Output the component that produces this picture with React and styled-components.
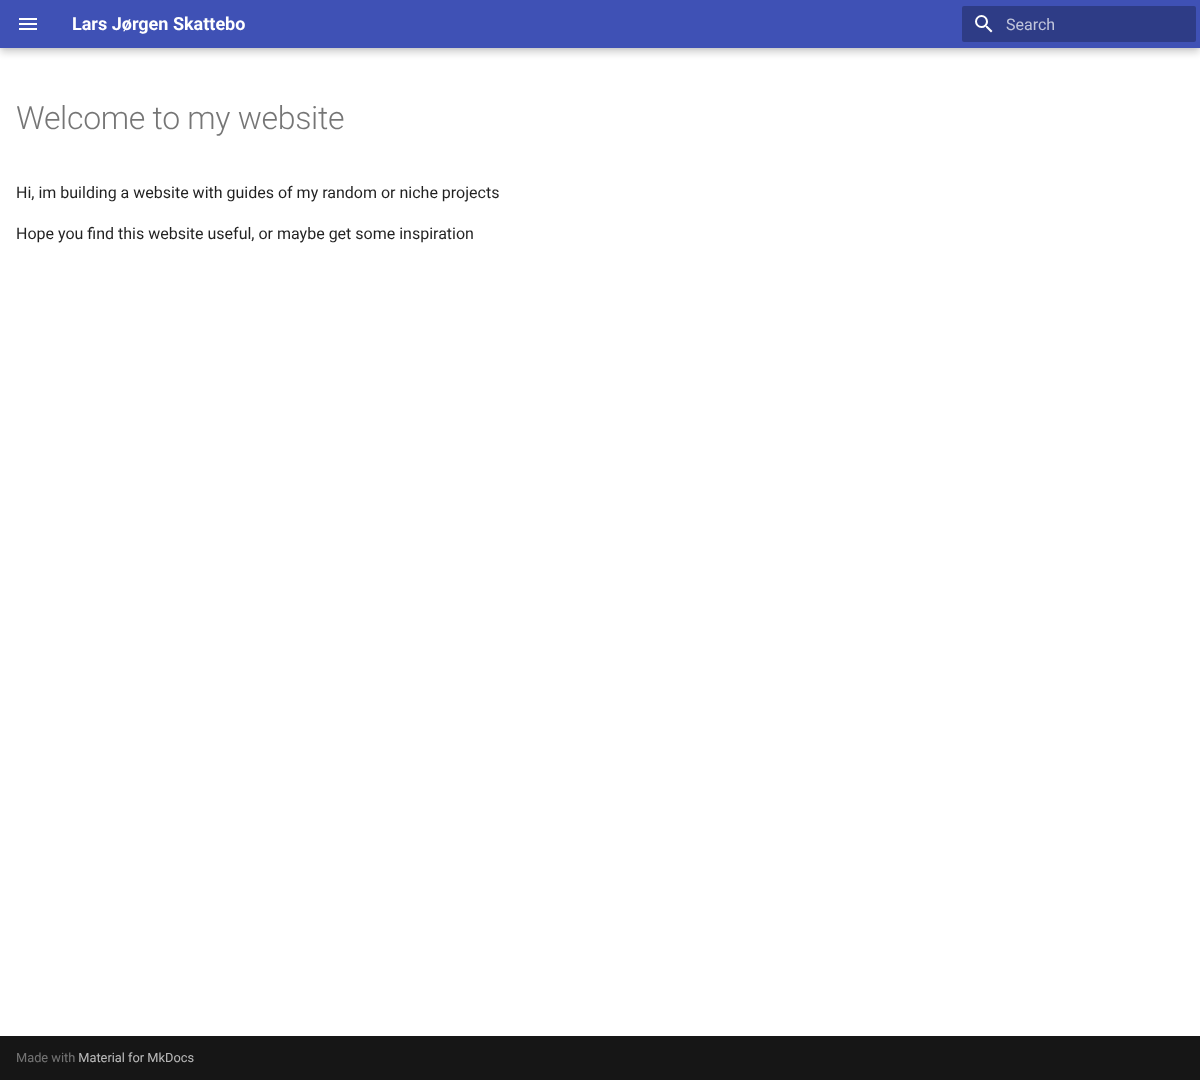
import React from "react";
import styled, { createGlobalStyle } from "styled-components";

const Global = createGlobalStyle`
  html, body { margin: 0; padding: 0; height: 100%; background: #fff; }
  #root { height: 100%; }
  * { box-sizing: border-box; }
  body {
    font-family: Roboto, "Helvetica Neue", Arial, sans-serif;
    text-rendering: geometricPrecision;
    -webkit-font-smoothing: antialiased;
  }
`;

const Page = styled.div`
  display: flex;
  flex-direction: column;
  min-height: 1080px;
  will-change: transform;
`;

const Header = styled.header`
  display: flex;
  align-items: center;
  height: 48px;
  padding: 0 4px;
  background: #3f51b5;
  color: #fff;
  box-shadow: 0 0 4px rgba(0, 0, 0, 0.1), 0 4px 8px rgba(0, 0, 0, 0.2);
`;

const IconButton = styled.button`
  display: flex;
  align-items: center;
  justify-content: center;
  width: 48px;
  height: 48px;
  padding: 0;
  border: 0;
  background: none;
  color: inherit;
`;

const SiteTitle = styled.div`
  flex: 1;
  margin-left: 20px;
  padding-top: 1px;
  font-size: 18px;
  font-weight: 700;
  line-height: 48px;
`;

const Search = styled.div`
  display: flex;
  align-items: center;
  width: 234px;
  height: 36px;
  padding-left: 10px;
  gap: 10px;
  border-radius: 2px;
  background: rgba(0, 0, 0, 0.26);
  color: rgba(255, 255, 255, 0.7);
  font-size: 16px;
`;

const Main = styled.main`
  flex: 1;
  padding: 0 16px;
`;

const Heading = styled.h1`
  margin: 49.6px 0 40.7px;
  color: rgba(0, 0, 0, 0.54);
  font-size: 32px;
  font-weight: 300;
  line-height: 41.6px;
  letter-spacing: -0.32px;
`;

const Paragraph = styled.p`
  margin: 0 0 16px;
  color: rgba(0, 0, 0, 0.87);
  font-size: 16px;
  line-height: 25.6px;
`;

const Footer = styled.footer`
  display: flex;
  align-items: center;
  height: 44px;
  padding: 0 16px;
  background: #161616;
  color: rgba(255, 255, 255, 0.4);
  font-size: 12.8px;
`;

const FooterLink = styled.a`
  margin-left: 3px;
  color: rgba(255, 255, 255, 0.7);
`;

export default function App() {
  return (
    <Page>
      <Global />
      <Header>
        <IconButton aria-label="Menu">
          <svg width="24" height="24" viewBox="0 0 24 24" fill="currentColor">
            <path d="M3 6h18v2H3V6m0 5h18v2H3v-2m0 5h18v2H3v-2z" />
          </svg>
        </IconButton>
        <SiteTitle>Lars Jørgen Skattebo</SiteTitle>
        <Search>
          <svg width="24" height="24" viewBox="0 0 24 24" fill="#fff">
            <path d="M9.5 3A6.5 6.5 0 0 1 16 9.5c0 1.61-.59 3.09-1.56 4.23l.27.27h.79l5 5-1.5 1.5-5-5v-.79l-.27-.27A6.516 6.516 0 0 1 9.5 16 6.5 6.5 0 0 1 3 9.5 6.5 6.5 0 0 1 9.5 3m0 2C7 5 5 7 5 9.5S7 14 9.5 14 14 12 14 9.5 12 5 9.5 5z" />
          </svg>
          <span>Search</span>
        </Search>
      </Header>
      <Main>
        <Heading>Welcome to my website</Heading>
        <Paragraph>Hi, im building a website with guides of my random or niche projects</Paragraph>
        <Paragraph>Hope you find this website useful, or maybe get some inspiration</Paragraph>
      </Main>
      <Footer>
        Made with <FooterLink>Material for MkDocs</FooterLink>
      </Footer>
    </Page>
  );
}
